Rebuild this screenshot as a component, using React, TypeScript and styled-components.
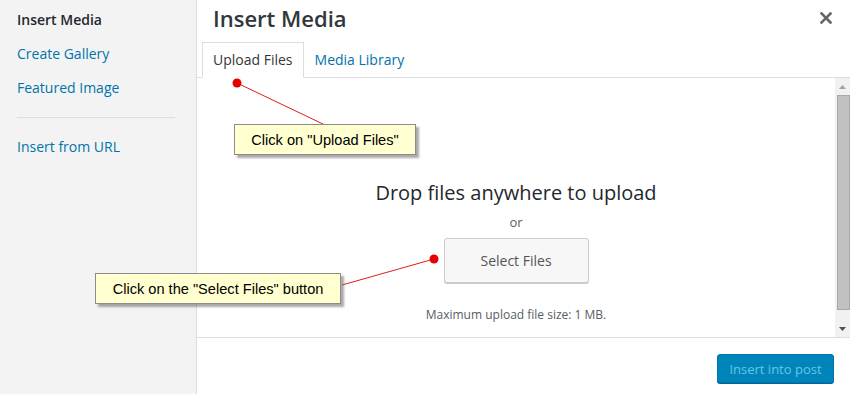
import styled, { createGlobalStyle } from "styled-components";

const GlobalStyle = createGlobalStyle`
  html, body {
    margin: 0;
    padding: 0;
    overflow: hidden;
    background: #fff;
  }
  * {
    box-sizing: border-box;
  }
`;

const menuItems = [
  { label: "Insert Media", active: true },
  { label: "Create Gallery" },
  { label: "Featured Image" },
];

const App = () => {
  return (
    <Frame>
      <GlobalStyle />
      <Sidebar>
        {menuItems.map((m) => (
          <MenuItem key={m.label} $active={m.active}>
            {m.label}
          </MenuItem>
        ))}
        <Separator />
        <MenuItem>Insert from URL</MenuItem>
      </Sidebar>

      <Main>
        <Header>
          <Title>Insert Media</Title>
          <CloseButton aria-label="Close">
            <svg width="12" height="12" viewBox="0 0 12 12">
              <path d="M1.5 1.5 L10.5 10.5 M10.5 1.5 L1.5 10.5" stroke="#666" strokeWidth="2.6" strokeLinecap="square" />
            </svg>
          </CloseButton>
        </Header>

        <Tabs>
          <Tab $active>Upload Files</Tab>
          <Tab>Media Library</Tab>
        </Tabs>

        <Content>
          <Uploader>
            <DropText>Drop files anywhere to upload</DropText>
            <OrText>or</OrText>
            <SelectButton>Select Files</SelectButton>
            <MaxSize>Maximum upload file size: 1 MB.</MaxSize>
          </Uploader>
          <Scrollbar>
            <Arrow>
              <svg width="7" height="4" viewBox="0 0 7 4">
                <path d="M0 4 L3.5 0 L7 4 Z" fill="#a3a3a3" />
              </svg>
            </Arrow>
            <Thumb />
            <Arrow>
              <svg width="7" height="4" viewBox="0 0 7 4">
                <path d="M0 0 L3.5 4 L7 0 Z" fill="#505050" />
              </svg>
            </Arrow>
          </Scrollbar>
        </Content>

        <Footer>
          <PrimaryButton>Insert into post</PrimaryButton>
        </Footer>
      </Main>

      <Lines width="850" height="394">
        <line x1="237" y1="83" x2="325" y2="125" stroke="#e31b1b" strokeWidth="1" />
        <circle cx="237" cy="83" r="4.5" fill="#e60000" />
        <line x1="434" y1="259" x2="342" y2="285" stroke="#e31b1b" strokeWidth="1" />
        <circle cx="434" cy="259" r="4.5" fill="#e60000" />
      </Lines>

      <Callout style={{ left: 234, top: 124, width: 182 }}>Click on "Upload Files"</Callout>
      <Callout style={{ left: 95, top: 273, width: 246 }}>Click on the "Select Files" button</Callout>
    </Frame>
  );
};

export default App;

const Frame = styled.div`
  position: relative;
  display: flex;
  width: 850px;
  height: 394px;
  font-family: "Open Sans", "Noto Sans", sans-serif;
  overflow: hidden;
`;

const Sidebar = styled.nav`
  width: 197px;
  flex-shrink: 0;
  background: #f3f3f3;
  border-right: 1px solid #dddddd;
  padding-top: 3px;
  display: flex;
  flex-direction: column;
`;

const MenuItem = styled.div<{ $active?: boolean }>`
  padding: 8px 17px;
  font-size: 14px;
  line-height: 18px;
  color: ${(p) => (p.$active ? "#23282d" : "#0073aa")};
  font-weight: ${(p) => (p.$active ? 600 : 400)};
`;

const Separator = styled.div`
  height: 1px;
  background: #dddddd;
  margin: 12px 21px 12px 17px;
`;

const Main = styled.div`
  flex: 1;
  display: flex;
  flex-direction: column;
  min-width: 0;
`;

const Header = styled.div`
  height: 42px;
  display: flex;
  align-items: center;
  justify-content: space-between;
  padding: 0 18px 0 16px;
`;

const Title = styled.h1`
  margin: 0;
  font-size: 22px;
  font-weight: 600;
  color: #32373c;
  line-height: 32px;
  margin-top: -6px;
`;

const CloseButton = styled.div`
  display: flex;
  margin-top: -7px;
`;

const Tabs = styled.div`
  display: flex;
  padding-left: 5px;
  border-bottom: 1px solid #dddddd;
  height: 36px;
`;

const Tab = styled.div<{ $active?: boolean }>`
  padding: 0 10px;
  height: 36px;
  line-height: 34px;
  font-size: 14px;
  color: ${(p) => (p.$active ? "#32373c" : "#0073aa")};
  background: ${(p) => (p.$active ? "#fff" : "transparent")};
  border: 1px solid ${(p) => (p.$active ? "#dddddd" : "transparent")};
  border-bottom-color: ${(p) => (p.$active ? "#fff" : "transparent")};
  margin-bottom: -1px;
`;

const Content = styled.div`
  flex: 1;
  display: flex;
  min-height: 0;
`;

const Uploader = styled.div`
  flex: 1;
  display: flex;
  flex-direction: column;
  align-items: center;
  padding-top: 101px;
`;

const DropText = styled.div`
  font-size: 20px;
  line-height: 28px;
  color: #23282d;
`;

const OrText = styled.div`
  margin-top: 5px;
  font-size: 13px;
  line-height: 20px;
  color: #555d66;
`;

const SelectButton = styled.div`
  margin-top: 6px;
  width: 145px;
  height: 45px;
  display: flex;
  align-items: center;
  justify-content: center;
  background: #f7f7f7;
  border: 1px solid #cccccc;
  border-radius: 3px;
  box-shadow: 0 1px 0 #cccccc;
  font-size: 14px;
  color: #555555;
`;

const MaxSize = styled.div`
  margin-top: 23px;
  font-size: 12px;
  line-height: 18px;
  color: #555d66;
`;

const Scrollbar = styled.div`
  width: 15px;
  background: #f1f1f1;
  display: flex;
  flex-direction: column;
  align-items: center;
`;

const Arrow = styled.div`
  height: 17px;
  width: 15px;
  display: flex;
  align-items: center;
  justify-content: center;
`;

const Thumb = styled.div`
  width: 13px;
  background: #c1c1c1;
  border: 1px solid #a8a8a8;
  margin: 0 0 auto 1px;
  flex: 0 0 215px;
`;

const Footer = styled.div`
  height: 57px;
  border-top: 1px solid #dddddd;
  display: flex;
  justify-content: flex-end;
  align-items: flex-start;
  padding: 16px 16px 0 0;
`;

const PrimaryButton = styled.div`
  width: 117px;
  height: 29px;
  display: flex;
  align-items: center;
  justify-content: center;
  background: #0085ba;
  border: 1px solid #0073aa;
  border-radius: 3px;
  box-shadow: 0 1px 0 #006799;
  font-size: 13px;
  color: #66c6e4;
`;

const Lines = styled.svg`
  position: absolute;
  left: 0;
  top: 0;
  pointer-events: none;
`;

const Callout = styled.div`
  position: absolute;
  height: 31px;
  display: flex;
  align-items: center;
  justify-content: center;
  background: #ffffcf;
  border: 1px solid #8c8c8c;
  box-shadow: 3px 3px 2px rgba(100, 100, 100, 0.55);
  font-family: "Liberation Sans", Arial, sans-serif;
  font-size: 14.6px;
  color: #000;
`;
